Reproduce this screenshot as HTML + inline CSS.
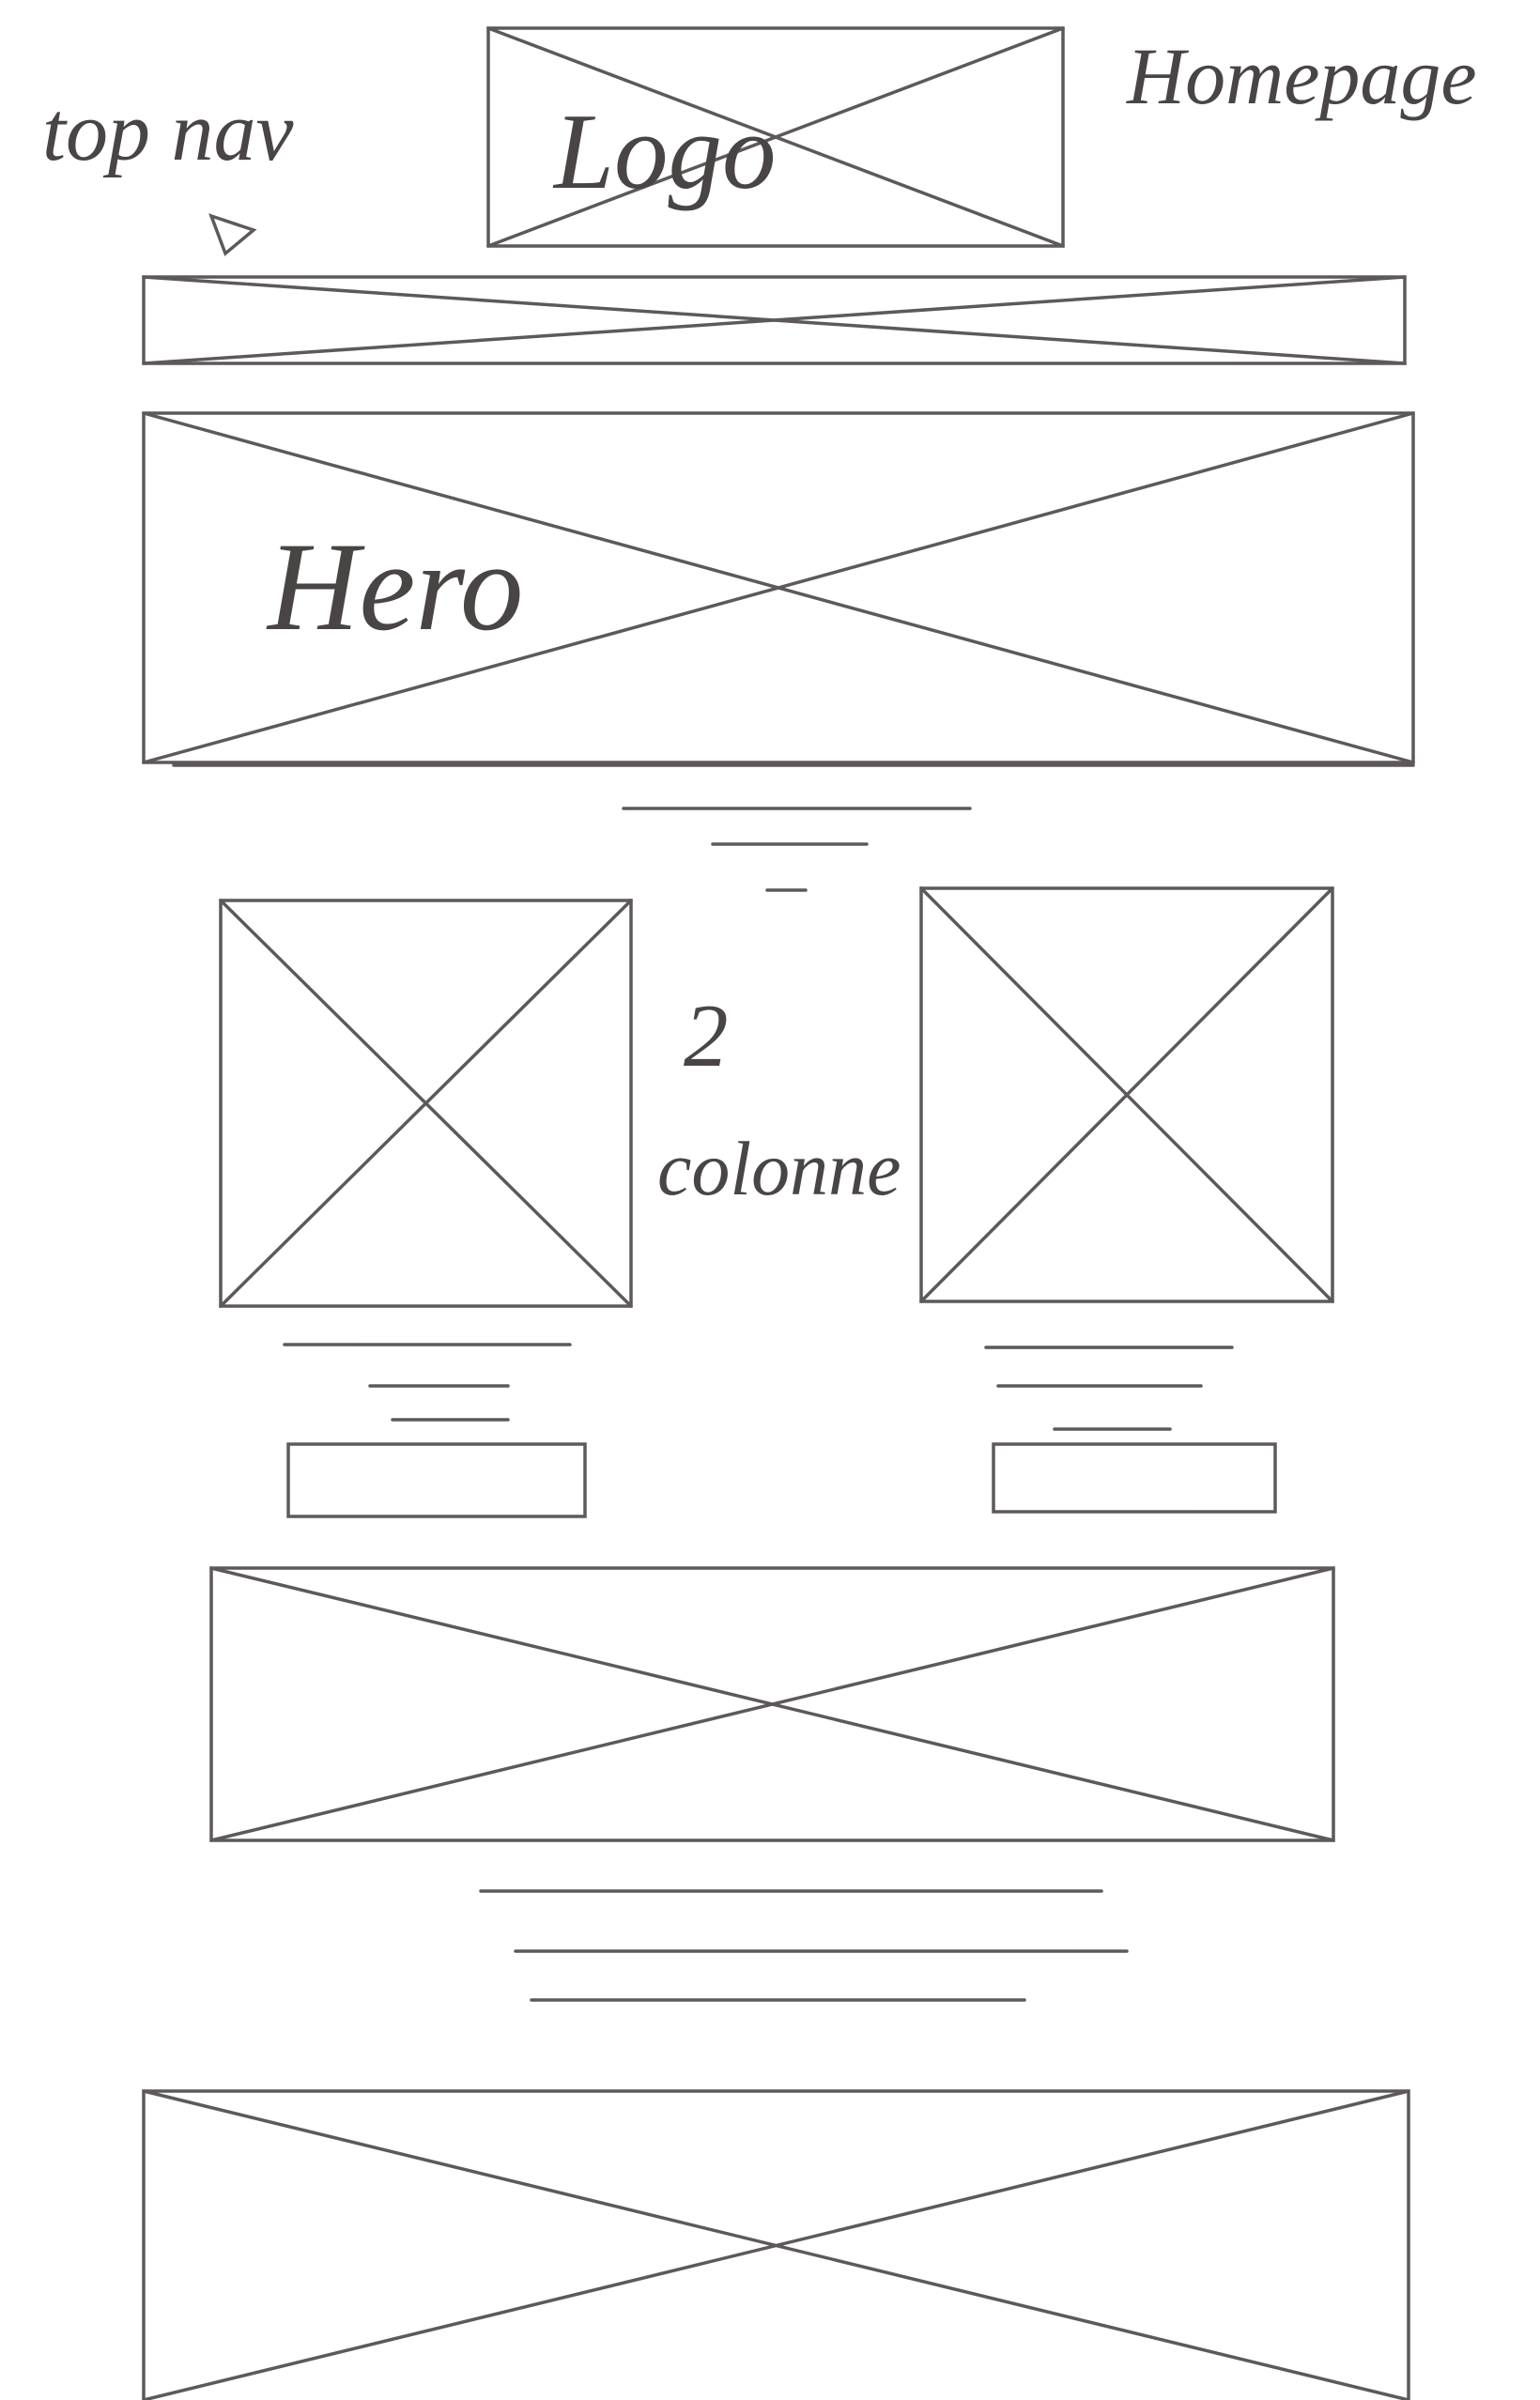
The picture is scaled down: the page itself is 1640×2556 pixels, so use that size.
<!DOCTYPE html>
<html><head><meta charset="utf-8"><style>
html,body{margin:0;padding:0;background:#fff;}
svg{display:block}
text{font-family:"Liberation Serif",serif;font-style:italic;fill:#4a4545;}
</style></head><body>
<svg width="1640" height="2556" viewBox="0 0 1640 2556" xmlns="http://www.w3.org/2000/svg">
<g stroke="#4d4848" stroke-width="3.5" fill="none" stroke-linecap="round" opacity="0.9">
<rect x="520" y="30" width="612" height="232"/>
<line x1="520" y1="30" x2="1132" y2="262"/><line x1="1132" y1="30" x2="520" y2="262"/>
<rect x="153" y="295" width="1343" height="92"/>
<line x1="153" y1="295" x2="1496" y2="387"/><line x1="1496" y1="295" x2="153" y2="387"/>
<rect x="153" y="440" width="1352" height="372"/>
<line x1="153" y1="440" x2="1505" y2="812"/><line x1="1505" y1="440" x2="153" y2="812"/>
<line x1="185" y1="815" x2="1505" y2="815"/>
<line x1="664" y1="861" x2="1033" y2="861"/>
<line x1="759" y1="899" x2="923" y2="899"/>
<line x1="817" y1="948" x2="858" y2="948"/>
<rect x="235" y="959" width="437" height="432"/>
<line x1="235" y1="959" x2="672" y2="1391"/><line x1="672" y1="959" x2="235" y2="1391"/>
<rect x="981" y="946" width="438" height="440"/>
<line x1="981" y1="946" x2="1419" y2="1386"/><line x1="1419" y1="946" x2="981" y2="1386"/>
<line x1="303" y1="1432" x2="607" y2="1432"/>
<line x1="394" y1="1476" x2="541" y2="1476"/>
<line x1="418" y1="1512" x2="541" y2="1512"/>
<rect x="307" y="1538" width="316" height="77"/>
<line x1="1050" y1="1435" x2="1312" y2="1435"/>
<line x1="1063" y1="1476" x2="1279" y2="1476"/>
<line x1="1123" y1="1522" x2="1246" y2="1522"/>
<rect x="1058" y="1538" width="300" height="72"/>
<rect x="225" y="1670" width="1195" height="290"/>
<line x1="225" y1="1670" x2="1420" y2="1960"/><line x1="1420" y1="1670" x2="225" y2="1960"/>
<line x1="512" y1="2014" x2="1173" y2="2014"/>
<line x1="549" y1="2078" x2="1200" y2="2078"/>
<line x1="566" y1="2130" x2="1091" y2="2130"/>
<rect x="153" y="2227" width="1347" height="340"/>
<line x1="153" y1="2227" x2="1500" y2="2556"/><line x1="1500" y1="2227" x2="153" y2="2556"/>
<path d="M225 230 L270 245 L240 270 Z"/>
</g>
<text x="45" y="170" font-size="90">top nav</text>
<text x="590" y="200" font-size="115">Logo</text>
<text x="1200" y="110" font-size="86">Homepage</text>
<text x="285" y="670" font-size="135">Hero</text>
<text x="728" y="1135" font-size="95">2</text>
<text x="700" y="1272" font-size="82">colonne</text>
</svg>
</body></html>
